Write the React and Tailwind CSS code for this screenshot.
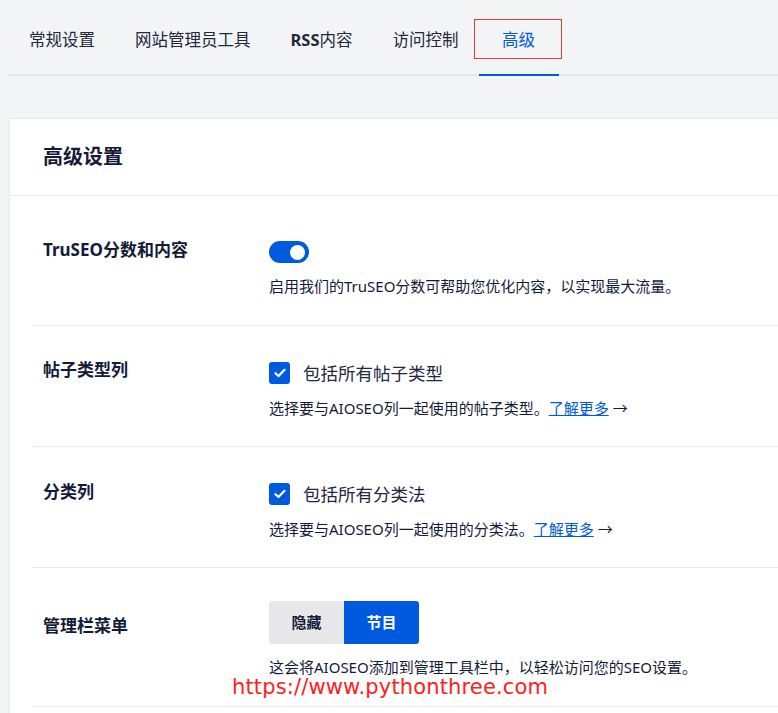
const font = { fontFamily: '"Noto Sans", "Noto Sans CJK SC", sans-serif' };

const tabs = ["常规设置", "网站管理员工具", "RSS内容", "访问控制", "高级"];

const Check = () => (
  <span className="flex h-[22px] w-[21px] shrink-0 items-center justify-center rounded-[3px] bg-[#005ae0]">
    <svg width="12" height="10" viewBox="0 0 12 10" fill="none">
      <path d="M1.5 5.2 4.5 8 10.5 1.8" stroke="white" strokeWidth="2.2" strokeLinecap="round" strokeLinejoin="round" />
    </svg>
  </span>
);

const Row = ({ label, labelPad, children }) => (
  <div className="flex border-b border-[#e5e7eb]">
    <div className={"w-[236px] shrink-0 pl-[10px] text-[17px] font-bold leading-[24px] text-[#141b38] " + labelPad}>{label}</div>
    <div className="flex-1">{children}</div>
  </div>
);

const LearnMore = () => (
  <>
    <span className="text-[#005ae0] underline">了解更多</span>
    <span className="ml-1 text-[#141b38]">→</span>
  </>
);

const Desc = ({ children }) => (
  <div className="mt-[12px] text-[15px] leading-[22px] text-[#141b38]">{children}</div>
);

export default function App() {
  return (
    <div className="min-h-[713px] w-[778px] overflow-hidden bg-[#f3f4f6]" style={font}>
      <div className="ml-[9px] flex h-[76px] items-end border-b-2 border-[#e5e7eb]">
        {tabs.map((t, i) => {
          const active = i === tabs.length - 1;
          return (
            <div
              key={t}
              className={
                "relative flex h-[55px] items-start pt-[9px] text-[16.5px] leading-[24px] " +
                (active ? "w-[80px] justify-center text-[#005ae0]" : "px-[20px] text-[#23283f]")
              }
            >
              {i === 2 ? (
                <span>
                  <span className="font-bold">RSS</span>内容
                </span>
              ) : (
                t
              )}
              {active && (
                <>
                  <span className="absolute left-[-5px] top-0 h-[40px] w-[88px] border border-[#e03c3c]" />
                  <span className="absolute -bottom-[2px] left-0 h-[2px] w-[80px] bg-[#005ae0]" />
                </>
              )}
            </div>
          );
        })}
      </div>

      <div className="ml-[9px] mt-[42px] border border-r-0 border-[#e5e7eb] bg-white">
        <div className="flex h-[77px] items-center border-b border-[#e5e7eb] pl-[33px] text-[20px] font-bold text-[#141b38]">
          高级设置
        </div>
        <div className="pl-[23px]">
          <Row label="TruSEO分数和内容" labelPad="pt-[42px]">
            <div className="pb-[28px] pt-[45px]">
              <div className="flex h-[22px] w-[40px] items-center justify-end rounded-full bg-[#005ae0] pr-[4px]">
                <span className="h-[15px] w-[15px] rounded-full bg-white" />
              </div>
              <Desc>启用我们的TruSEO分数可帮助您优化内容，以实现最大流量。</Desc>
            </div>
          </Row>
          <Row label="帖子类型列" labelPad="pt-[32px]">
            <div className="pb-[27px] pt-[35px]">
              <div className="flex h-[24px] items-center gap-[13px] text-[17.5px] text-[#23283f]">
                <Check />
                包括所有帖子类型
              </div>
              <Desc>
                选择要与AIOSEO列一起使用的帖子类型。<LearnMore />
              </Desc>
            </div>
          </Row>
          <Row label="分类列" labelPad="pt-[33px]">
            <div className="pb-[27px] pt-[35px]">
              <div className="flex h-[24px] items-center gap-[13px] text-[17.5px] text-[#23283f]">
                <Check />
                包括所有分类法
              </div>
              <Desc>
                选择要与AIOSEO列一起使用的分类法。<LearnMore />
              </Desc>
            </div>
          </Row>
          <Row label="管理栏菜单" labelPad="pt-[46px]">
            <div className="relative pb-[28px] pt-[33px]">
              <div className="flex h-[43px] w-[150px] overflow-hidden rounded-[3px] text-[15px] font-bold">
                <div className="flex w-[75px] items-center justify-center bg-[#e8e8eb] text-[#141b38]">隐藏</div>
                <div className="flex w-[75px] items-center justify-center bg-[#005ae0] text-white">节目</div>
              </div>
              <Desc>这会将AIOSEO添加到管理工具栏中，以轻松访问您的SEO设置。</Desc>
              <div
                className="absolute left-[-37px] top-[107px] text-[21px] leading-[24px] text-[#ff2020]"
                style={{ fontFamily: '"DejaVu Sans", sans-serif', letterSpacing: "0.15px" }}
              >
                https://www.pythonthree.com
              </div>
            </div>
          </Row>
          <div className="h-[40px]" />
        </div>
      </div>
    </div>
  );
}
